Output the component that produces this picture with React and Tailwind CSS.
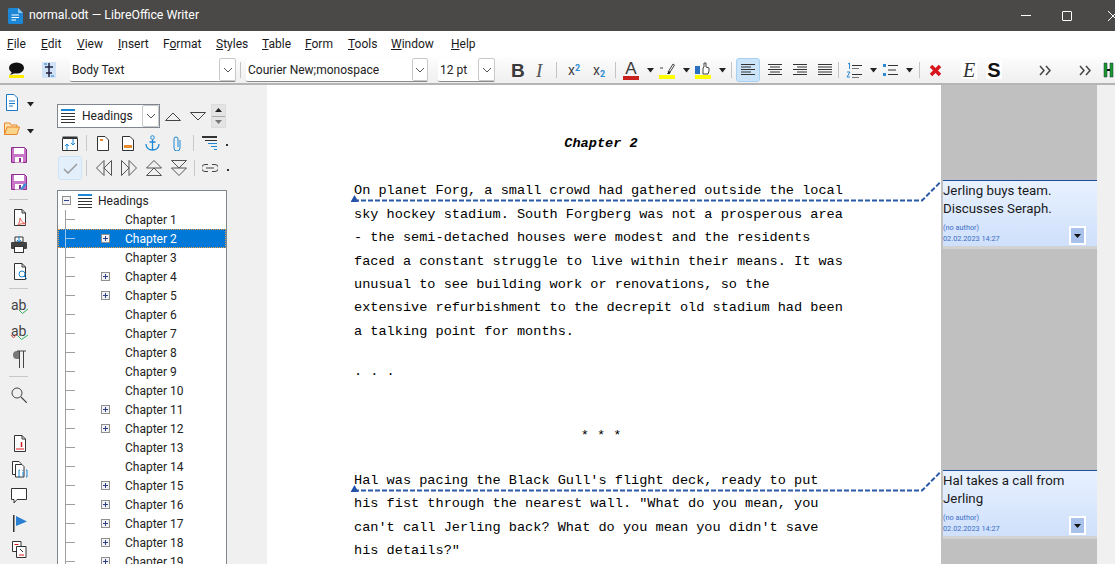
import React from 'react';

const UI = "font-['Roboto',sans-serif]";

// ===== SMALL HELPERS =====
const Caret = ({ className = '' }) => (
  <svg width="9" height="5" viewBox="0 0 9 5" className={`shrink-0 ${className}`}>
    <path d="M1 0h7L4.500 4.500z" fill="#222" />
  </svg>
);

const Chevron = () => (
  <svg width="10" height="6" viewBox="0 0 10 6">
    <path d="M1 1l4 4 4-4" fill="none" stroke="#555" />
  </svg>
);

const Sep = () => <div className="w-px h-[16px] bg-[#c4c4c4] shrink-0" />;

const Combo = ({ label, width, drop }) => (
  <div className={`flex items-center h-[24px] bg-white border-b border-[#8a8a8a] rounded-[2px] shrink-0 ${width}`}>
    <span className="flex-1 pl-[2px] text-[12px] text-[#222] whitespace-nowrap">{label}</span>
    <span className={`flex items-center justify-center h-[23px] border border-[#c9c9c9] rounded-[2px] ${drop}`}>
      <Chevron />
    </span>
  </div>
);

const Lines = ({ rows, stroke = '#333' }) => (
  <svg width="16" height="16" viewBox="0 0 16 16" className="block">
    {rows.map(([x1, x2], i) => (
      <path key={i} d={`M${x1} ${2.500 + i * 2.500}H${x2}`} stroke={stroke} />
    ))}
  </svg>
);

// ===== TITLE BAR =====
const TitleBar = () => (
  <div className="h-[31px] bg-[#4a4947] flex items-center pl-[8px] text-white">
    <svg width="15" height="16" viewBox="0 0 15 16" className="shrink-0">
      <path d="M1.500 0H10l5 5v9.500a1.500 1.500 0 0 1-1.500 1.500h-12A1.500 1.500 0 0 1 0 14.500v-13A1.500 1.500 0 0 1 1.500 0z" fill="#1b87d6" />
      <path d="M10 0l5 5h-5z" fill="#8cc8f0" />
      <path d="M3.500 7H11M3.500 9.500H11M3.500 12H8" stroke="#fff" />
    </svg>
    <span className="ml-[6px] text-[12.300px] whitespace-nowrap">normal.odt — LibreOffice Writer</span>
    <div className="ml-auto flex items-center">
      <div className="w-[10px] h-px bg-white" />
      <div className="ml-[31px] w-[10px] h-[10px] border border-white rounded-[1px]" />
      <svg width="10" height="10" viewBox="0 0 10 10" className="ml-[36px] mr-[-3px] shrink-0">
        <path d="M0 0l10 10M10 0L0 10" stroke="#fff" />
      </svg>
    </div>
  </div>
);

// ===== MENU BAR =====
const menus = [
  ['F', 'ile', 'w-[34px]'],
  ['E', 'dit', 'w-[36px]'],
  ['V', 'iew', 'w-[41px]'],
  ['I', 'nsert', 'w-[45px]'],
  ['F', 'ormat', 'w-[53px]', true],
  ['S', 'tyles', 'w-[46px]'],
  ['T', 'able', 'w-[43px]'],
  ['F', 'orm', 'w-[43px]'],
  ['T', 'ools', 'w-[43px]'],
  ['W', 'indow', 'w-[60px]'],
  ['H', 'elp', 'w-[40px]'],
];

const MenuBar = () => (
  <div className="h-[26px] bg-white flex items-center pl-[7px] text-[12px] text-[#1a1a1a]">
    {menus.map(([first, rest, width, second]) => (
      <span key={first + rest} className={`${width} whitespace-nowrap`}>
        {second ? (
          <>F<span className="underline">o</span>rmat</>
        ) : (
          <><span className="underline">{first}</span>{rest}</>
        )}
      </span>
    ))}
  </div>
);

// ===== FORMATTING TOOLBAR =====
const Toolbar = () => (
  <div className="h-[28px] border-b-2 border-[#b5b5b5] bg-gradient-to-b from-[#fdfdfd] to-[#efefef] flex items-center pl-[8px] *:shrink-0">
    <svg width="17" height="16" viewBox="0 0 17 16">
      <ellipse cx="8.500" cy="6" rx="7.500" ry="5.500" fill="#111" />
      <path d="M4 10L2 13l5-2z" fill="#111" />
      <rect x="1" y="13" width="15" height="3" fill="#ffee00" />
    </svg>
    <svg width="16" height="16" viewBox="0 0 16 16" className="ml-[16px]">
      <rect x="1" y="0" width="14" height="16" fill="#cfe2f6" />
      <path d="M8 1v14M4 5h8M5 11h6" stroke="#224" strokeWidth="1.500" />
      <path d="M3 2h3M10 14h3" stroke="#2a7fd0" />
    </svg>
    <div className="ml-[13px]"><Combo label="Body Text" width="w-[166px]" drop="w-[17px]" /></div>
    <div className="ml-[4px]"><Sep /></div>
    <div className="ml-[5px]"><Combo label="Courier New;monospace" width="w-[182px]" drop="w-[16px]" /></div>
    <div className="ml-[10px]"><Combo label="12 pt" width="w-[57px]" drop="w-[17px]" /></div>

    <span className="ml-[16px] w-[14px] text-[19px] leading-none font-bold text-[#3a3a3a] font-['Liberation_Sans',sans-serif]">B</span>
    <span className="ml-[11px] w-[20px] text-[19px] leading-none italic text-[#555] font-['Liberation_Serif',serif]">I</span>
    <Sep />
    <span className="ml-[11px] w-[25px] text-[14px] leading-none text-[#444] whitespace-nowrap">x<sup className="text-[9px] text-[#2a8ad4] font-bold">2</sup></span>
    <span className="w-[22px] text-[14px] leading-none text-[#444] whitespace-nowrap">x<sub className="text-[9px] text-[#2a8ad4] font-bold">2</sub></span>
    <Sep />
    <div className="ml-[7px] w-[16px] flex flex-col items-center">
      <span className="text-[17px] leading-[15px] text-[#3a3a3a] font-['Liberation_Sans',sans-serif]">A</span>
      <div className="w-[16px] h-[4px] bg-[#c9211e]" />
    </div>
    <Caret className="ml-[7px]" />
    <div className="ml-[4px] w-[16px] flex flex-col">
      <svg width="16" height="14" viewBox="0 0 16 14">
        <path d="M1 7h3M9 11l5-8 1.500 1-5 8z" fill="none" stroke="#444" />
        <path d="M8 13l2-3 1.500 1-1 2z" fill="#222" />
      </svg>
      <div className="w-[16px] h-[4px] bg-[#ffff00]" />
    </div>
    <Caret className="ml-[7px]" />
    <div className="ml-[4px] w-[16px] flex flex-col">
      <svg width="16" height="14" viewBox="0 0 16 14">
        <path d="M0 5h5v8H0z" fill="#2a6fc0" />
        <path d="M8 13V7l1-1V2h2v4l3 1v3l-1 3z" fill="#fff" stroke="#444" />
      </svg>
      <div className="w-[16px] h-[4px] bg-[#ffff00]" />
    </div>
    <Caret className="ml-[7px]" />
    <div className="ml-[4px]"><Sep /></div>
    <div className="ml-[4px] w-[24px] h-[24px] bg-[#cce4f9] border border-[#a6d1f5] rounded-[3px] flex items-center justify-center">
      <Lines rows={[[1, 15], [1, 11], [1, 15], [1, 11], [1, 15]]} />
    </div>
    <div className="ml-[7px]"><Lines rows={[[1, 15], [3, 13], [1, 15], [3, 13], [1, 15]]} /></div>
    <div className="ml-[9px]"><Lines rows={[[1, 15], [5, 15], [1, 15], [5, 15], [1, 15]]} /></div>
    <div className="ml-[9px]"><Lines rows={[[1, 15], [1, 15], [1, 15], [1, 15], [1, 15]]} /></div>
    <div className="ml-[5px]"><Sep /></div>
    <svg width="16" height="16" viewBox="0 0 16 16" className="ml-[7px]">
      <path d="M6 3.500h10M6 12.500h10" stroke="#333" />
      <path d="M6 6.500h7M6 15.500h7" stroke="#777" />
      <path d="M2 2l1.500-1v6M1 10h3l-3 5h3" fill="none" stroke="#2a8ad4" />
    </svg>
    <Caret className="ml-[7px]" />
    <svg width="15" height="14" viewBox="0 0 15 14" className="ml-[5px]">
      <rect x="0" y="1" width="3" height="3" fill="#2a8ad4" />
      <rect x="0" y="10" width="3" height="3" fill="#2a8ad4" />
      <path d="M5 2.500h10M5 7h8M5 11.500h10" stroke="#333" />
    </svg>
    <Caret className="ml-[7px]" />
    <div className="ml-[5px]"><Sep /></div>
    <svg width="13" height="13" viewBox="0 0 13 13" className="ml-[9px]">
      <path d="M2 2l9 9M11 2l-9 9" stroke="#d8141c" strokeWidth="3.500" />
    </svg>
    <span className="ml-[19px] w-[16px] h-[18px] bg-white text-center text-[20px] leading-[18px] italic text-[#333] font-['Liberation_Serif',serif]">E</span>
    <span className="ml-[9px] w-[16px] h-[18px] bg-white text-center text-[20px] leading-[18px] font-bold text-[#111] font-['Liberation_Sans',sans-serif]">S</span>
    <span className="ml-[37px]"><Chevrons /></span>
    <span className="ml-[27px]"><Chevrons /></span>
    <svg width="11" height="16" viewBox="0 0 11 16" className="ml-[11px]">
      <path d="M1 1h3v14H1z" fill="#1d9a2c" stroke="#134" strokeWidth=".5" />
      <path d="M7 1h3v14H7z" fill="#1d9a2c" stroke="#134" strokeWidth=".5" />
      <path d="M4 8h3" stroke="#111" strokeWidth="2" />
    </svg>
  </div>
);

const Chevrons = () => (
  <svg width="13" height="11" viewBox="0 0 13 11" className="block">
    <path d="M1 1l4 4.500-4 4.500M7 1l4 4.500-4 4.500" fill="none" stroke="#444" strokeWidth="1.500" />
  </svg>
);

// ===== LEFT SIDEBAR ICONS =====
const Doc = ({ children, stroke = '#333' }) => (
  <svg width="16" height="17" viewBox="0 0 16 17" className="block">
    <path d="M2.500.5H10L13.500 4v12.500h-11z" fill="#fff" stroke={stroke} />
    <path d="M10 .5V4h3.500" fill="none" stroke={stroke} />
    {children}
  </svg>
);

const Floppy = ({ children }) => (
  <svg width="16" height="16" viewBox="0 0 16 16" className="block">
    <path d="M.5.5h13l2 2v13H.5z" fill="#c877c8" stroke="#8c2f8c" />
    <rect x="3" y="1" width="10" height="6" fill="#fff" />
    <rect x="4" y="10" width="8" height="5.500" fill="#fff" />
    <rect x="8" y="11" width="2" height="4" fill="#8c2f8c" />
    {children}
  </svg>
);

const Rule = () => <div className="w-[19px] h-px bg-[#c8c8c8] ml-[9px]" />;

const Sidebar = () => (
  <div className="w-[57px] shrink-0 flex flex-col pt-[9px]">
    <div className="flex items-center pl-[5px]">
      <svg width="14" height="17" viewBox="0 0 14 17">
        <path d="M1.500.5H9L12.500 4v12.500h-11z" fill="#fff" stroke="#1b78c8" />
        <path d="M4 7h6M4 9.500h6M4 12h4" stroke="#1b78c8" />
      </svg>
      <Caret className="ml-[7px] mt-[4px]" />
    </div>
    <div className="flex items-center pl-[4px] mt-[11px]">
      <svg width="16" height="13" viewBox="0 0 16 13">
        <path d="M.5 12.500V1H6l1 2h6v2" fill="#fce2b3" stroke="#e8862a" />
        <path d="M.5 12.500L3 5h12.500L13 12.500z" fill="#fbd48c" stroke="#e8862a" />
      </svg>
      <Caret className="ml-[6px] mt-[5px]" />
    </div>
    <div className="pl-[11px] mt-[12px]"><Floppy /></div>
    <div className="pl-[11px] mt-[11px]">
      <Floppy>
        <path d="M9 15l5-6 2 1.500-5 5.500z" fill="#3d8fd6" />
      </Floppy>
    </div>
    <div className="mt-[9px]"><Rule /></div>
    <div className="pl-[12px] mt-[9px]">
      <Doc><path d="M8 9c1 3 3 5 6 6-2-.5-6-.5-8 1 1-2 2-4 2-7z" fill="none" stroke="#e2574c" /></Doc>
    </div>
    <div className="pl-[11px] mt-[10px]">
      <svg width="16" height="17" viewBox="0 0 16 17" className="block">
        <rect x="0" y="6" width="16" height="7" rx="1" fill="#444" />
        <rect x="3.500" y="10.500" width="9" height="6" fill="#fff" stroke="#333" />
        <path d="M4 1h8v5H4z" fill="#fff" stroke="#333" />
        <path d="M8 0v6M6 4l2 2 2-2" fill="none" stroke="#1b87d6" />
      </svg>
    </div>
    <div className="pl-[12px] mt-[10px]">
      <Doc>
        <circle cx="10" cy="11" r="3" fill="#fff" stroke="#1b87d6" />
        <path d="M12 13l3 3" stroke="#1b87d6" />
      </Doc>
    </div>
    <div className="mt-[8px]"><Rule /></div>
    <div className="pl-[11px] mt-[9px] relative h-[17px]">
      <span className="text-[14px] leading-[14px] text-[#444] block">ab</span>
      <svg width="11" height="7" viewBox="0 0 11 7" className="absolute left-[18px] top-[10px]">
        <path d="M1 2l3.500 3.500L10 1" fill="none" stroke="#2db35a" />
      </svg>
    </div>
    <div className="pl-[11px] mt-[9px] relative h-[17px]">
      <span className="text-[14px] leading-[14px] text-[#444] block">ab</span>
      <svg width="22" height="7" viewBox="0 0 22 7" className="absolute left-[10px] top-[10px]">
        <path d="M1 1l2.500 3L6 1" fill="none" stroke="#e2574c" />
        <path d="M8 2l3.500 3.500L18 1" fill="none" stroke="#2db35a" />
      </svg>
    </div>
    <div className="pl-[13px] mt-[9px]">
      <svg width="13" height="18" viewBox="0 0 13 18" className="block">
        <path d="M6.500 1H4a3.500 3.500 0 0 0 0 8h2.500z" fill="#777" />
        <path d="M6.500 1v17M10.500 1v17M4 1h9" fill="none" stroke="#444" />
      </svg>
    </div>
    <div className="mt-[8px]"><Rule /></div>
    <div className="pl-[11px] mt-[10px]">
      <svg width="16" height="16" viewBox="0 0 16 16" className="block">
        <circle cx="6" cy="6" r="5" fill="none" stroke="#444" />
        <path d="M10 10l6 6" stroke="#444" strokeWidth="1.200" />
      </svg>
    </div>
    <div className="pl-[12px] mt-[32px]">
      <Doc><path d="M4 14h8" stroke="#d8141c" /><path d="M9.500 7v5" stroke="#d8141c" strokeWidth="1.500" /></Doc>
    </div>
    <div className="pl-[12px] mt-[9px]">
      <svg width="16" height="18" viewBox="0 0 16 18" className="block">
        <path d="M.5.5H7l2 2v11H.5z" fill="#fff" stroke="#333" />
        <path d="M3.500 3.500H10l2 2V16H3.500z" fill="#fff" stroke="#333" />
        <path d="M8 9H7v7h1M14 9h1v7h-1M11 9v1M11 11v4" fill="none" stroke="#1b87d6" />
      </svg>
    </div>
    <div className="pl-[11px] mt-[9px]">
      <svg width="16" height="16" viewBox="0 0 16 16" className="block">
        <path d="M.5.5h15v11H6L3 15v-3.500H.5z" fill="#fff" stroke="#333" />
      </svg>
    </div>
    <div className="pl-[13px] mt-[11px]">
      <svg width="15" height="17" viewBox="0 0 15 17" className="block">
        <path d="M.75 0v17" stroke="#333" strokeWidth="1.500" />
        <path d="M3 1l11 5.500L3 11z" fill="#2a7fd0" />
      </svg>
    </div>
    <div className="pl-[12px] mt-[9px]">
      <svg width="15" height="17" viewBox="0 0 15 17" className="block">
        <path d="M.5.5H9v10H.5z" fill="#fff" stroke="#333" />
        <path d="M4.500 5.500H14v11H4.500z" fill="#fff" stroke="#333" />
        <path d="M2.500 3.500h4M7 14h5" stroke="#d8141c" />
        <path d="M8 8l3 3" stroke="#333" />
      </svg>
    </div>
  </div>
);

// ===== NAVIGATOR =====
const chapters = [
  [1, false], [2, true], [3, false], [4, true], [5, true], [6, false], [7, false],
  [8, false], [9, false], [10, false], [11, true], [12, true], [13, false], [14, false],
  [15, true], [16, true], [17, true], [18, true], [19, true],
];

const Plus = () => (
  <svg width="9" height="9" viewBox="0 0 9 9" className="block">
    <rect x=".5" y=".5" width="8" height="8" fill="#f2f2f2" stroke="#8f8f8f" />
    <path d="M2 4.500h5M4.500 2v5" stroke="#2b3f8c" />
  </svg>
);

const ChapterRow = ({ n, plus }) => {
  const active = n === 2;
  return (
    <div className={`relative flex items-center h-[19px] pl-[43px] text-[12px] whitespace-nowrap ${active ? 'bg-[#0078d7] text-white outline-1 outline-dotted -outline-offset-1 outline-[#f0a040]' : 'text-[#222]'}`}>
      <svg width="10" height="19" viewBox="0 0 10 19" className="absolute left-[7px] top-0">
        <path d="M.5 0v19M.5 9.500H10" stroke={active ? '#9fc4e8' : '#a0a0a0'} />
      </svg>
      <span className="w-[24px] shrink-0">{plus && <Plus />}</span>
      Chapter {n}
    </div>
  );
};

const TreeRule = () => <div className="w-px h-[16px] bg-[#c8c8c8] shrink-0" />;

const HeadingIcon = () => (
  <svg width="14" height="14" viewBox="0 0 14 14" className="block">
    <path d="M0 1h14" stroke="#1b87d6" strokeWidth="2" />
    <path d="M0 4.500h14M0 7.500h14M0 10.500h14M0 13.500h14" stroke="#333" />
  </svg>
);

const Navigator = () => (
  <div className="w-[210px] shrink-0 flex flex-col pt-[19px]">
    <div className="flex items-center h-[24px]">
      <div className="flex items-center w-[103px] h-[24px] bg-white border border-[#80868d] shrink-0">
        <span className="ml-[3px]"><HeadingIcon /></span>
        <span className="ml-[7px] text-[12px] text-[#222] flex-1">Headings</span>
        <span className="flex items-center justify-center w-[17px] h-[22px] border border-[#c9c9c9] rounded-[2px]"><Chevron /></span>
      </div>
      <svg width="16" height="9" viewBox="0 0 16 9" className="ml-[5px]">
        <path d="M.5 8.500h15L8 1zM3 8.500" fill="none" stroke="#444" />
      </svg>
      <svg width="16" height="9" viewBox="0 0 16 9" className="ml-[9px]">
        <path d="M.5.500h15L8 8z" fill="none" stroke="#444" />
      </svg>
      <div className="ml-[5px] w-[15px] h-[24px] bg-[#e4e4e4] border border-[#dcdcdc] flex flex-col shrink-0">
        <span className="h-[12px] flex items-center justify-center border-b border-[#aaa]">
          <svg width="7" height="4" viewBox="0 0 7 4"><path d="M3.500 0L7 4H0z" fill="#222" /></svg>
        </span>
        <span className="h-[11px] flex items-center justify-center">
          <svg width="7" height="4" viewBox="0 0 7 4"><path d="M0 0h7L3.500 4z" fill="#777" /></svg>
        </span>
      </div>
    </div>

    <div className="flex items-center h-[16px] mt-[7px]">
      <svg width="16" height="15" viewBox="0 0 16 15" className="ml-[5px]">
        <path d="M.5 2.500h15v12H.5z" fill="#fff" stroke="#333" />
        <path d="M.5.500h15v2H.5z" fill="#333" />
        <path d="M5 14V8M3 10l2-2 2 2M11 3v6M9 7l2 2 2-2" fill="none" stroke="#1b87d6" />
      </svg>
      <div className="ml-[8px]"><TreeRule /></div>
      <svg width="12" height="15" viewBox="0 0 12 15" className="ml-[10px]">
        <path d="M.5.500H8L11.500 4v10.500H.5z" fill="#fff" stroke="#333" />
        <rect x="3" y="3" width="3" height="2" fill="#ea8a2e" />
      </svg>
      <svg width="12" height="15" viewBox="0 0 12 15" className="ml-[13px]">
        <path d="M.5.500H8L11.500 4v10.500H.5z" fill="#fff" stroke="#333" />
        <rect x="2" y="9" width="8" height="3" fill="#ea8a2e" />
      </svg>
      <svg width="15" height="16" viewBox="0 0 15 16" className="ml-[11px]">
        <circle cx="7.500" cy="2.500" r="1.800" fill="none" stroke="#1b87d6" />
        <path d="M7.500 4.500V15M4.500 7h6M1 9c0 4 3 6 6.500 6S14 13 14 9" fill="none" stroke="#1b87d6" strokeWidth="1.300" />
      </svg>
      <svg width="9" height="15" viewBox="0 0 9 15" className="ml-[13px]">
        <path d="M7 4v8a2.800 2.800 0 0 1-6 0V3a2 2 0 0 1 4 0v8" fill="none" stroke="#1b87d6" />
      </svg>
      <div className="ml-[11px]"><TreeRule /></div>
      <svg width="15" height="15" viewBox="0 0 15 15" className="ml-[8px]">
        <path d="M0 1h15" stroke="#333" strokeWidth="2" />
        <path d="M3 4.500h12" stroke="#333" />
        <path d="M6 7.500h9M9 10.500h6M12 13.500h3" stroke="#1b87d6" />
      </svg>
      <span className="ml-[9px] w-[2px] h-[2px] bg-[#333] mt-[3px]" />
    </div>

    <div className="flex items-center h-[24px] mt-[5px]">
      <div className="ml-px w-[24px] h-[24px] bg-[#e3f0fb] border border-[#cfe4f7] rounded-[3px] flex items-center justify-center shrink-0">
        <svg width="15" height="11" viewBox="0 0 15 11"><path d="M1 6l4 4 9-9" fill="none" stroke="#9b9b9b" strokeWidth="1.500" /></svg>
      </div>
      <div className="ml-[4px]"><TreeRule /></div>
      <svg width="16" height="16" viewBox="0 0 16 16" className="ml-[9px]">
        <path d="M8 .5L.5 8 8 15.500zM15.500.5L8 8l7.500 7.500z" fill="none" stroke="#555" />
      </svg>
      <svg width="16" height="16" viewBox="0 0 16 16" className="ml-[9px]">
        <path d="M.5.500L8 8 .5 15.500zM8 .5L15.500 8 8 15.500z" fill="none" stroke="#555" />
      </svg>
      <svg width="16" height="16" viewBox="0 0 16 16" className="ml-[9px]">
        <path d="M.5 8L8 .5 15.500 8zM.5 15.500L8 8l7.500 7.500z" fill="none" stroke="#555" />
      </svg>
      <svg width="16" height="16" viewBox="0 0 16 16" className="ml-[9px]">
        <path d="M.5.500h15L8 8zM.5 8h15L8 15.500z" fill="none" stroke="#555" />
      </svg>
      <div className="ml-[7px]"><TreeRule /></div>
      <svg width="16" height="8" viewBox="0 0 16 8" className="ml-[7px]">
        <path d="M6 .5H3a3.500 3.500 0 0 0 0 7h3M10 .5h3a3.500 3.500 0 0 1 0 7h-3M4 4h8" fill="none" stroke="#444" />
      </svg>
      <span className="ml-[9px] w-[2px] h-[2px] bg-[#333] mt-[3px]" />
    </div>

    <div className="mt-[10px] w-[170px] flex-1 min-h-0 bg-white border border-[#80868d] border-b-0 overflow-hidden">
      <div className="flex items-center h-[19px] pl-[4px] text-[12px] text-[#222]">
        <svg width="9" height="9" viewBox="0 0 9 9" className="shrink-0">
          <rect x=".5" y=".5" width="8" height="8" fill="#f2f2f2" stroke="#8f8f8f" />
          <path d="M2 4.500h5" stroke="#2b3f8c" />
        </svg>
        <span className="ml-[7px]"><HeadingIcon /></span>
        <span className="ml-[6px]">Headings</span>
      </div>
      {chapters.map(([n, plus]) => (
        <ChapterRow key={n} n={n} plus={plus} />
      ))}
    </div>
  </div>
);

// ===== DOCUMENT =====
const para1 = [
  'On planet Forg, a small crowd had gathered outside the local',
  'sky hockey stadium. South Forgberg was not a prosperous area',
  '- the semi-detached houses were modest and the residents',
  'faced a constant struggle to live within their means. It was',
  'unusual to see building work or renovations, so the',
  'extensive refurbishment to the decrepit old stadium had been',
  'a talking point for months.',
];

const para2 = [
  "Hal was pacing the Black Gull's flight deck, ready to put",
  'his fist through the nearest wall. "What do you mean, you',
  "can't call Jerling back? What do you mean you didn't save",
  'his details?"',
];

const Line = ({ children, className = '' }) => (
  <div className={`h-[23.4px] leading-[23.4px] whitespace-pre ${className}`}>{children}</div>
);

const AnchorLine = ({ top }) => (
  <svg width="600" height="24" viewBox="0 0 600 24" className={`absolute left-[84px] ${top}`}>
    <path d="M3.500 0L7.500 7H-.5z" transform="translate(0 14)" fill="#1f4fa8" />
    <path d="M3 19.500h568L590 .5" fill="none" stroke="#2a5aa8" strokeWidth="2" strokeDasharray="5 2" />
  </svg>
);

const Document = () => (
  <div className="relative w-[674px] shrink-0 bg-white pl-[87px] pt-[47px] text-[13.58px] text-black font-['Liberation_Mono',monospace] overflow-hidden">
    <Line className="w-[494px] text-center font-bold italic">Chapter 2</Line>
    <div className="mt-[24px]">
      {para1.map((l) => <Line key={l}>{l}</Line>)}
    </div>
    <Line className="mt-[17px]">. . .</Line>
    <Line className="mt-[40px] w-[494px] text-center">* * *</Line>
    <div className="mt-[22px]">
      {para2.map((l) => <Line key={l}>{l}</Line>)}
    </div>
    <AnchorLine top="top-[96px]" />
    <AnchorLine top="top-[386px]" />
  </div>
);

// ===== COMMENTS COLUMN =====
const Comment = ({ lines, className = '' }) => (
  <div className={`relative h-[69px] ml-[2px] ${className}`}>
    <div className="h-[66px] border-t border-[#1f4f9c] bg-gradient-to-b from-[#e8f1ff] to-[#cfe0fb] text-[13.300px] leading-[18px] text-[#1a1a1a]">
      <div className="pt-px">
        {lines.map((l) => <div key={l} className="whitespace-nowrap">{l}</div>)}
      </div>
      <div className="absolute left-0 top-[42px] text-[7.300px] leading-[11px] text-[#3a6fc4] whitespace-nowrap">
        <div>(no author)</div>
        <div>02.02.2023 14:27</div>
      </div>
      <div className="absolute right-[11px] top-[46px] w-[17px] h-[19px] bg-[#a9c2ec] border-2 border-white flex items-center justify-center">
        <svg width="7" height="4" viewBox="0 0 7 4"><path d="M0 0h7L3.500 4z" fill="#111" /></svg>
      </div>
    </div>
    <div className="h-[3px] bg-[#d2d2d2]" />
  </div>
);

const Comments = () => (
  <div className="w-[156px] shrink-0 bg-[#c0c0c0] pt-[95px] overflow-hidden">
    <Comment lines={['Jerling buys team.', 'Discusses Seraph.']} />
    <Comment className="mt-[221px]" lines={['Hal takes a call from', 'Jerling']} />
  </div>
);

export default function App() {
  return (
    <div className={`w-[1115px] h-[564px] overflow-hidden flex flex-col bg-[#f0f0f0] ${UI}`}>
      <TitleBar />
      <MenuBar />
      <Toolbar />
      <div className="flex flex-1 min-h-0">
        <Sidebar />
        <Navigator />
        <Document />
        <Comments />
      </div>
    </div>
  );
}
